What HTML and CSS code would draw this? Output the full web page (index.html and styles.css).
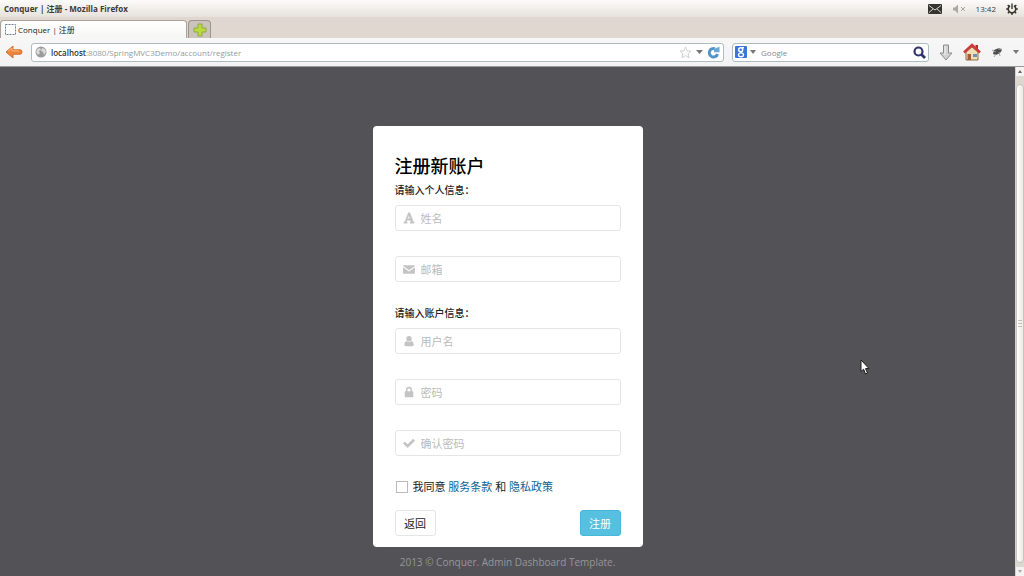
FILE: index.html
```html
<!DOCTYPE html>
<html lang="zh-CN">
<head>
<meta charset="utf-8">
<title>Conquer | 注册</title>
<link rel="stylesheet" href="styles.css">
</head>
<body>
<header class="titlebar">
  <span class="window-title">Conquer | 注册 - Mozilla Firefox</span>
  <div class="tray">
    <svg width="14" height="10" viewBox="0 0 14 10"><rect width="14" height="10" rx="1" fill="#35342f"/><path d="M1 1.500l6 4.500 6-4.500M1 8.500l4-3.500M13 8.500L9 5" fill="none" stroke="#d8d5d0"/></svg>
    <svg width="14" height="10" viewBox="0 0 14 10"><path d="M1 3.500h2L6 .5v9L3 6.500H1z" fill="#aaa6a0"/><path d="M9 3l4 4M13 3L9 7" stroke="#aaa6a0"/></svg>
    <time>13:42</time>
    <svg width="12" height="12" viewBox="0 0 12 12" fill="none" stroke="#38372f"><path d="M4 2.800a3.800 3.800 0 1 0 4 0" stroke-width="1.600"/><path d="M6 .5V6M.2 6h2M9.800 6h2M1.700 2l1.300 1.300M10.300 2L9 3.300M1.800 10.300L3.300 8.900M10.200 10.300L8.700 8.900M6 10v2" stroke-width="1.400"/></svg>
  </div>
</header>
<div class="tabs">
  <div class="tab">
    <svg width="11" height="11" viewBox="0 0 11 11"><rect x=".5" y=".5" width="10" height="10" fill="#fff" stroke="#6d7f92" stroke-dasharray="2 1"/></svg>
    <span>Conquer | 注册</span>
  </div>
  <button class="new-tab" aria-label="新标签页"><svg width="14" height="14" viewBox="0 0 14 14"><path d="M5 1h4v4h4v4H9v4H5V9H1V5h4z" fill="#b9dc3c" stroke="#8fa845"/></svg></button>
</div>
<nav class="navbar">
  <button class="icon-button" aria-label="后退"><svg width="18" height="14" viewBox="0 0 18 14"><path d="M1 7l7-6v3.800h7q2 0 2 2.200t-2 2.200H8V13z" fill="#ef843b" stroke="#cf6f35"/><path d="M3 6.500l4-3.500v2.800h7" fill="none" stroke="#fbb47d"/></svg></button>
  <div class="address">
    <svg width="12" height="12" viewBox="0 0 12 12"><circle cx="6" cy="6" r="5.500" fill="#9b9b9b"/><path d="M2 3l3-1 1 2-2 1 1 2-2 2-2-3zM7 2l3 1 1 3-2 3-1-3-2-1z" fill="#d9d9d9"/></svg>
    <span class="url"><b>localhost</b>:8080/SpringMVC3Demo/account/register</span>
    <svg width="13" height="13" viewBox="0 0 13 13"><path d="M6.500 1l1.600 3.800 4 .3-3 2.700.9 4-3.500-2.200L3 11.800l.9-4-3-2.700 4-.3z" fill="#fff" stroke="#cfcfcf"/></svg>
    <svg width="7" height="4" viewBox="0 0 7 4"><path d="M0 0h7L3.500 4z" fill="#777"/></svg>
    <svg width="13" height="13" viewBox="0 0 13 13"><path d="M8 2.900A4.200 4.200 0 1 0 10.500 8" fill="none" stroke="#5293c8" stroke-width="3"/><path d="M7 6.300V1l1.500 1.500L12.500.5v5.800z" fill="#69a8d9"/></svg>
  </div>
  <div class="search">
    <svg width="12" height="12" viewBox="0 0 12 12"><rect width="12" height="12" rx="1" fill="#3c73dc"/><g fill="none" stroke="#fff" stroke-width="1.400"><ellipse cx="5.700" cy="3.700" rx="2" ry="1.900"/><path d="M7 1.700h2M6.500 5.500q-1.300.7 0 1.200"/><ellipse cx="6" cy="8.800" rx="2.500" ry="1.900"/></g></svg>
    <svg width="6" height="4" viewBox="0 0 6 4"><path d="M0 0h6L3 4z" fill="#777"/></svg>
    <input type="search" placeholder="Google" aria-label="搜索">
    <svg width="13" height="13" viewBox="0 0 13 13" fill="none" stroke="#2f356f"><circle cx="5.500" cy="5.500" r="4" stroke-width="2.200"/><path d="M8.500 8.500l3.500 3.500" stroke-width="2.800"/></svg>
  </div>
  <button class="icon-button" aria-label="下载"><svg width="14" height="17" viewBox="0 0 14 17"><path d="M4.500 1h5v8H13l-6 7-6-7h3.500z" fill="#d2d2d2" stroke="#8c8c8c"/><path d="M6 2v9" stroke="#f3f3f3"/></svg></button>
  <button class="icon-button" aria-label="主页"><svg width="18" height="18" viewBox="0 0 18 18"><path d="M3 9v8h12V9L9 4z" fill="#f1dfb4" stroke="#8c6e4b"/><path d="M12.500 2H15v5l-2.500-2z" fill="#b92b2b"/><path d="M1 9.500L9 2l8 7.500" fill="none" stroke="#ce3b3b" stroke-width="2.500"/><path d="M4.500 11H8v6H4.500z" fill="#a75b38"/><path d="M10 11h4v3h-4z" fill="#6c91bd"/></svg></button>
  <button class="icon-button" aria-label="附加组件"><svg width="12" height="11" viewBox="0 0 12 11"><path d="M3 3l5-2 3 2-2 3-4 2-3-1z" fill="#4b4b4b"/><path d="M1 3l4 2M5 7l-2 3M8 5l1 4M7 2l4 0" stroke="#a5a5a5"/></svg></button>
  <svg width="6" height="4" viewBox="0 0 6 4"><path d="M0 0h6L3 4z" fill="#777"/></svg>
</nav>
<div class="viewport">
  <main class="page">
    <form class="card">
      <h1>注册新账户</h1>
      <p class="hint">请输入个人信息：</p>
      <div class="fields">
        <label class="field"><svg viewBox="0 0 14 14"><path d="M1 12v1h4v-1l-1-.5.7-2h4l.8 2-1.200.5v1H13v-1l-1-.6L8 1H6.300L2.300 11.400zM5.200 8l1.500-4 1.500 4z" stroke="#c4c4c4" stroke-width=".6"/></svg><input type="text" placeholder="姓名" aria-label="姓名"></label>
        <label class="field"><svg viewBox="0 0 14 14"><path d="M1 2.500h12q1 0 1 1L7 8.500 0 3.500q0-1 1-1zM0 5l7 5 7-5v6q0 1.500-1 1.500H1q-1 0-1-1.500z"/></svg><input type="email" placeholder="邮箱" aria-label="邮箱"></label>
      </div>
      <p class="hint">请输入账户信息：</p>
      <div class="fields">
        <label class="field"><svg viewBox="0 0 14 14"><circle cx="7" cy="4.300" r="3.200"/><path d="M4 7q3 2.300 6 0 2.500.6 2.500 4.300 0 1.700-1.500 1.700H3q-1.500 0-1.500-1.700Q1.500 7.600 4 7z"/></svg><input type="text" placeholder="用户名" aria-label="用户名"></label>
        <label class="field"><svg viewBox="0 0 14 14"><path d="M3.500 6V4.500a3.500 3.500 0 0 1 7 0V6h.7q.8 0 .8.800v5.400q0 .8-.8.800H2.800Q2 13 2 12.200V6.800Q2 6 2.800 6zM5.300 6h3.400V4.500a1.700 1.700 0 0 0-3.400 0z"/></svg><input type="password" placeholder="密码" aria-label="密码"></label>
        <label class="field"><svg viewBox="0 0 14 14"><path d="M0 7.500L2.200 5.300l3.200 3.200L11.800 2.100 14 4.300 5.400 12.900z"/></svg><input type="password" placeholder="确认密码" aria-label="确认密码"></label>
      </div>
      <div class="agree">
        <input type="checkbox" id="agree">
        <label for="agree">我同意 <a href="#">服务条款</a> 和 <a href="#">隐私政策</a></label>
      </div>
      <div class="actions">
        <button type="button" class="btn">返回</button>
        <button type="submit" class="btn btn-info">注册</button>
      </div>
    </form>
    <footer class="copyright">2013 © Conquer. Admin Dashboard Template.</footer>
    <svg class="cursor" width="10" height="16" viewBox="0 0 10 16"><path d="M1 1v11.500l2.600-2.300L5.500 15l2-.9-2-4.500H9z" fill="#fff" stroke="#1c1c1c"/></svg>
  </main>
  <div class="scrollbar">
    <svg width="8" height="9" viewBox="0 0 8 9"><path d="M2 6l2-3 2 3z" fill="#666"/></svg>
    <div class="track"><div class="thumb"><svg width="4" height="7" viewBox="0 0 4 7"><path d="M0 .5h4M0 3.500h4M0 6.500h4" stroke="#c3beb7"/></svg></div></div>
    <svg width="8" height="9" viewBox="0 0 8 9"><path d="M2 3l2 3 2-3z" fill="#aaa"/></svg>
  </div>
</div>
</body>
</html>
```

FILE: styles.css
```css
* { box-sizing: border-box; }

body {
  margin: 0;
  height: 100vh;
  display: flex;
  flex-direction: column;
  overflow: hidden;
  font-family: "Open Sans", "Noto Sans CJK SC", sans-serif;
  font-size: 10px;
  color: #222;
}

svg { display: block; flex: none; }
button, input { font: inherit; }

.titlebar {
  display: flex;
  align-items: center;
  justify-content: space-between;
  height: 17px;
  padding: 0 6px 0 4px;
  background: linear-gradient(#fcfbfa, #e7e2dc);
  font-size: 8px;
  color: #3c3b37;
}
.window-title { font-weight: 700; }
.tray { display: flex; align-items: center; gap: 10px; }

.tabs {
  display: flex;
  align-items: flex-end;
  gap: 1px;
  height: 21px;
  background: #dfd7d0;
}
.tab {
  display: flex;
  align-items: center;
  gap: 2px;
  width: 187px;
  height: 18px;
  padding: 0 4px;
  background: linear-gradient(#fff, #f7f6f5);
  border: 1px solid #aaa39b;
  border-bottom: 0;
  border-radius: 4px 4px 0 0;
  font-size: 8px;
}
.new-tab {
  display: grid;
  place-items: center;
  width: 23px;
  height: 18px;
  padding: 0;
  background: #cbc4bc;
  border: 1px solid #9c958d;
  border-bottom: 0;
  border-radius: 4px 4px 0 0;
}

.navbar {
  display: flex;
  align-items: center;
  gap: 8px;
  height: 29px;
  padding: 0 5px;
  background: linear-gradient(#f8f7f7, #f2f2f2);
  border-bottom: 1px solid #999;
}
.icon-button {
  padding: 0;
  background: none;
  border: 0;
}
.search ~ * { margin-left: 2px; }
.address, .search {
  display: flex;
  align-items: center;
  gap: 4px;
  height: 19px;
  padding: 0 3px;
  background: #fff;
  border: 1px solid #aebdbd;
  border-radius: 3px;
}
.address { flex: 1; }
.url { flex: 1; font-size: 8px; color: #999; }
.url b { font-weight: 600; color: #333; }
.search { width: 197px; gap: 3px; padding: 0 2px; }
.search input {
  flex: 1;
  min-width: 0;
  padding: 0 2px;
  border: 0;
  outline: 0;
  font-size: 8px;
}
.search input::placeholder { color: #888; }

.viewport { flex: 1; display: flex; min-height: 0; }
.page {
  position: relative;
  flex: 1;
  display: flex;
  flex-direction: column;
  align-items: center;
  padding-top: 59px;
  background: #535257;
}

.card {
  width: 270px;
  padding: 27px 22px 11px;
  background: #fff;
  border-radius: 4px;
}
h1 {
  margin: 0 0 3px;
  font-size: 18px;
  line-height: 26px;
  font-weight: 500;
  color: #000;
}
.hint {
  margin: 0 0 6px;
  font-size: 10px;
  line-height: 17px;
  font-weight: 500;
}
.fields { display: grid; gap: 25px; margin-bottom: 23px; }
.field {
  display: flex;
  align-items: center;
  gap: 6px;
  height: 26px;
  padding: 0 7px;
  border: 1px solid #e5e5e5;
  border-radius: 3px;
}
.field svg { width: 12px; height: 12px; fill: #c4c4c4; }
.field input {
  flex: 1;
  min-width: 0;
  padding: 0;
  background: none;
  border: 0;
  outline: 0;
  font-size: 11px;
}
.field input::placeholder { color: #bbb; }

.agree {
  display: flex;
  align-items: center;
  gap: 5px;
  margin-bottom: 15px;
  padding-left: 1px;
  font-size: 11px;
  line-height: 16px;
}
.agree input {
  appearance: none;
  width: 12px;
  height: 12px;
  margin: 0;
  background: #fff;
  border: 1px solid #bbb;
}
.agree a { color: #0d638f; text-decoration: none; }

.actions { display: flex; justify-content: space-between; }
.btn {
  width: 41px;
  height: 26px;
  padding: 0;
  background: #fff;
  border: 1px solid #e5e5e5;
  border-radius: 3px;
  font-size: 11px;
  color: #222;
}
.btn-info { background: #57bfdf; border-color: #46b8da; color: #fff; }

.copyright {
  margin-top: 7px;
  font-size: 10px;
  line-height: 16px;
  color: #96969a;
}
.cursor { position: absolute; left: 860px; top: 292px; }

.scrollbar {
  display: flex;
  flex-direction: column;
  width: 9px;
  background: #f5f3f1;
  border-left: 1px solid #d5d1cc;
}
.track { flex: 1; display: flex; padding: 8px 0 4px; background: #ddd7d1; }
.thumb {
  flex: 1;
  display: grid;
  place-items: center;
  background: linear-gradient(90deg, #fff, #ece9e5);
  border: 1px solid #c9c3bc;
  border-radius: 4px;
}
```
